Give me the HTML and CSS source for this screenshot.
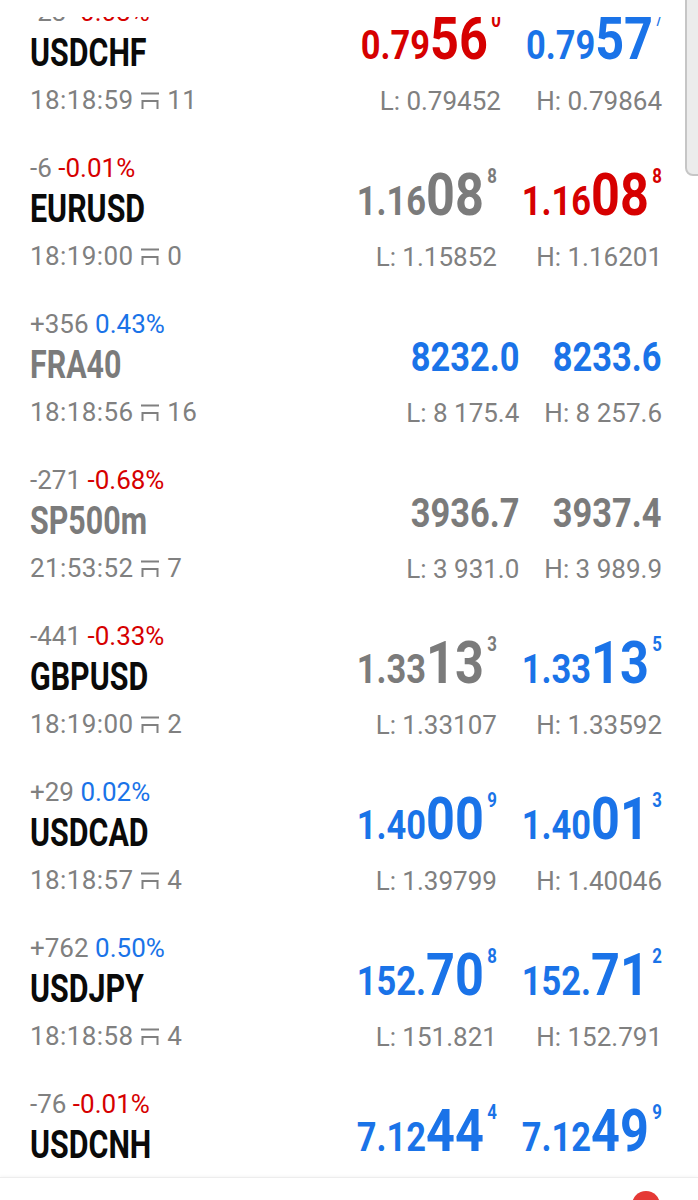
FILE: index.html
```html
<!DOCTYPE html>
<html lang="en">
<head>
<meta charset="UTF-8">
<meta name="viewport" content="width=device-width, initial-scale=1.0">
<title>Quotes</title>
<link rel="stylesheet" href="styles.css">
</head>
<body>
<div class="screen">
    <div class="top-gap"></div>
    <div class="quotes">
        <div class="quotes-inner">

            <div class="row">
                <div class="info">
                    <div class="change">-23 <span class="down">-0.03%</span></div>
                    <div class="symbol"><span>USDCHF</span></div>
                    <div class="time">18:18:59 <svg class="spread" viewBox="0 0 20 18"><path d="M1 1.5H19M2.5 17V9H17.5V17"/></svg> 11</div>
                </div>
                <div class="prices">
                    <div class="quote">
                        <div class="price red"><span class="lo">0.79</span>56<span class="sup">0</span></div>
                        <div class="range">L: 0.79452</div>
                    </div>
                    <div class="quote">
                        <div class="price blue"><span class="lo">0.79</span>57<span class="sup tick">/</span></div>
                        <div class="range">H: 0.79864</div>
                    </div>
                </div>
            </div>

            <div class="row">
                <div class="info">
                    <div class="change">-6 <span class="down">-0.01%</span></div>
                    <div class="symbol"><span>EURUSD</span></div>
                    <div class="time">18:19:00 <svg class="spread" viewBox="0 0 20 18"><path d="M1 1.5H19M2.5 17V9H17.5V17"/></svg> 0</div>
                </div>
                <div class="prices">
                    <div class="quote">
                        <div class="price gray"><span class="lo">1.16</span>08<span class="sup">8</span></div>
                        <div class="range">L: 1.15852</div>
                    </div>
                    <div class="quote">
                        <div class="price red"><span class="lo">1.16</span>08<span class="sup">8</span></div>
                        <div class="range">H: 1.16201</div>
                    </div>
                </div>
            </div>

            <div class="row">
                <div class="info">
                    <div class="change">+356 <span class="up">0.43%</span></div>
                    <div class="symbol closed"><span>FRA40</span></div>
                    <div class="time">18:18:56 <svg class="spread" viewBox="0 0 20 18"><path d="M1 1.5H19M2.5 17V9H17.5V17"/></svg> 16</div>
                </div>
                <div class="prices">
                    <div class="quote">
                        <div class="price blue"><span class="flat">8232.0</span></div>
                        <div class="range">L: 8 175.4</div>
                    </div>
                    <div class="quote">
                        <div class="price blue"><span class="flat">8233.6</span></div>
                        <div class="range">H: 8 257.6</div>
                    </div>
                </div>
            </div>

            <div class="row">
                <div class="info">
                    <div class="change">-271 <span class="down">-0.68%</span></div>
                    <div class="symbol closed"><span>SP500m</span></div>
                    <div class="time">21:53:52 <svg class="spread" viewBox="0 0 20 18"><path d="M1 1.5H19M2.5 17V9H17.5V17"/></svg> 7</div>
                </div>
                <div class="prices">
                    <div class="quote">
                        <div class="price gray"><span class="flat">3936.7</span></div>
                        <div class="range">L: 3 931.0</div>
                    </div>
                    <div class="quote">
                        <div class="price gray"><span class="flat">3937.4</span></div>
                        <div class="range">H: 3 989.9</div>
                    </div>
                </div>
            </div>

            <div class="row">
                <div class="info">
                    <div class="change">-441 <span class="down">-0.33%</span></div>
                    <div class="symbol"><span>GBPUSD</span></div>
                    <div class="time">18:19:00 <svg class="spread" viewBox="0 0 20 18"><path d="M1 1.5H19M2.5 17V9H17.5V17"/></svg> 2</div>
                </div>
                <div class="prices">
                    <div class="quote">
                        <div class="price gray"><span class="lo">1.33</span>13<span class="sup">3</span></div>
                        <div class="range">L: 1.33107</div>
                    </div>
                    <div class="quote">
                        <div class="price blue"><span class="lo">1.33</span>13<span class="sup">5</span></div>
                        <div class="range">H: 1.33592</div>
                    </div>
                </div>
            </div>

            <div class="row">
                <div class="info">
                    <div class="change">+29 <span class="up">0.02%</span></div>
                    <div class="symbol"><span>USDCAD</span></div>
                    <div class="time">18:18:57 <svg class="spread" viewBox="0 0 20 18"><path d="M1 1.5H19M2.5 17V9H17.5V17"/></svg> 4</div>
                </div>
                <div class="prices">
                    <div class="quote">
                        <div class="price blue"><span class="lo">1.40</span>00<span class="sup">9</span></div>
                        <div class="range">L: 1.39799</div>
                    </div>
                    <div class="quote">
                        <div class="price blue"><span class="lo">1.40</span>01<span class="sup">3</span></div>
                        <div class="range">H: 1.40046</div>
                    </div>
                </div>
            </div>

            <div class="row">
                <div class="info">
                    <div class="change">+762 <span class="up">0.50%</span></div>
                    <div class="symbol"><span>USDJPY</span></div>
                    <div class="time">18:18:58 <svg class="spread" viewBox="0 0 20 18"><path d="M1 1.5H19M2.5 17V9H17.5V17"/></svg> 4</div>
                </div>
                <div class="prices">
                    <div class="quote">
                        <div class="price blue"><span class="lo">152.</span>70<span class="sup">8</span></div>
                        <div class="range">L: 151.821</div>
                    </div>
                    <div class="quote">
                        <div class="price blue"><span class="lo">152.</span>71<span class="sup">2</span></div>
                        <div class="range">H: 152.791</div>
                    </div>
                </div>
            </div>

            <div class="row">
                <div class="info">
                    <div class="change">-76 <span class="down">-0.01%</span></div>
                    <div class="symbol"><span>USDCNH</span></div>
                    <div class="time">18:19:00 <svg class="spread" viewBox="0 0 20 18"><path d="M1 1.5H19M2.5 17V9H17.5V17"/></svg> 52</div>
                </div>
                <div class="prices">
                    <div class="quote">
                        <div class="price blue"><span class="lo">7.12</span>44<span class="sup">4</span></div>
                        <div class="range">L: 7.11830</div>
                    </div>
                    <div class="quote">
                        <div class="price blue"><span class="lo">7.12</span>49<span class="sup">9</span></div>
                        <div class="range">H: 7.13150</div>
                    </div>
                </div>
            </div>

        </div>
    </div>
    <div class="bottom-nav">
        <span class="badge"></span>
    </div>
    <div class="scroll-thumb"></div>
</div>
<script src="script.js"></script>
</body>
</html>
```

FILE: styles.css
```css
body {
    margin: 0;
    padding: 0;
    background: #fff;
    font-family: Roboto, 'Liberation Sans', sans-serif;
}
.screen {
    position: relative;
    width: 698px;
    height: 1200px;
    display: flex;
    flex-direction: column;
    overflow: hidden;
    background: #fff;
}
.top-gap {
    height: 17px;
    flex: none;
}
.quotes {
    flex: 1;
    overflow: hidden;
}
.quotes-inner {
    margin-top: -28px;
}
.row {
    display: grid;
    grid-template-columns: 1fr auto;
    height: 156px;
    box-sizing: border-box;
    padding: 8px 36px 0 30px;
}
.change {
    font-size: 26px;
    line-height: 30px;
    color: #808080;
    white-space: nowrap;
}
.down {
    color: #d60000;
}
.up {
    color: #1a73e8;
}
/* condensed look: Roboto bold squeezed horizontally */
.symbol {
    font-weight: 700;
    font-size: 38px;
    line-height: 53px;
    color: #0a0a0a;
    white-space: nowrap;
}
.symbol span {
    display: inline-block;
    transform: scaleX(0.8);
    transform-origin: left center;
}
.symbol.closed {
    color: #7b7b7b;
}
.time {
    font-size: 26px;
    line-height: 40px;
    letter-spacing: 0.4px;
    color: #808080;
    white-space: nowrap;
}
.spread {
    width: 20px;
    height: 18px;
    vertical-align: -1px;
    fill: none;
    stroke: #808080;
    stroke-width: 2;
}
.prices {
    display: flex;
    gap: 25px;
    padding-top: 11.5px;
}
.quote {
    display: flex;
    flex-direction: column;
    align-items: flex-end;
}
.price {
    font-weight: 700;
    font-size: 60px;
    line-height: 60px;
    height: 60px;
    white-space: nowrap;
    transform: scaleX(0.84);
    transform-origin: right center;
}
.price .lo {
    font-size: 41px;
    line-height: 1;
}
.price .flat {
    font-size: 41px;
    line-height: 1;
}
.price .sup {
    font-size: 20px;
    line-height: 1;
    vertical-align: 32px;
    margin-left: 4px;
}
.price .tick {
    font-size: 17px;
    font-weight: 500;
    vertical-align: 34px;
}
.red {
    color: #d60000;
}
.blue {
    color: #1a73e8;
}
.gray {
    color: #7b7b7b;
}
.range {
    font-size: 26px;
    line-height: 38px;
    margin-top: 13px;
    color: #808080;
    white-space: nowrap;
}
.bottom-nav {
    position: relative;
    flex: none;
    height: 22px;
    border-top: 1px solid #ededed;
    box-shadow: 0 -1px 3px rgba(0, 0, 0, 0.04);
    background: #fff;
}
.badge {
    position: absolute;
    left: 632px;
    top: 13px;
    width: 28px;
    height: 28px;
    border-radius: 50%;
    background: #e53935;
}
.scroll-thumb {
    position: absolute;
    top: -2px;
    right: -4px;
    width: 13px;
    height: 174px;
    background: #ececec;
    border: 2px solid #c6c6c6;
    border-radius: 0 0 0 8px;
}
```

FILE: script.js
```js
// prices are squeezed with scaleX; give back the width the transform saves
var SQUEEZE = 0.84;
document.querySelectorAll('.price').forEach(function (el) {
    var w = el.offsetWidth;
    el.style.marginLeft = (-w * (1 - SQUEEZE)) + 'px';
});
```
